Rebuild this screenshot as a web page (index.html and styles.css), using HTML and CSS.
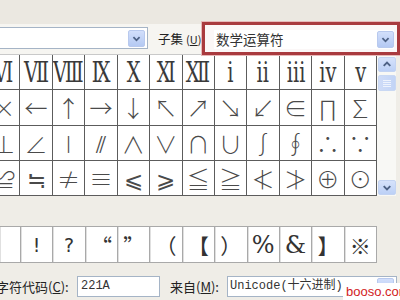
FILE: index.html
```html
<!DOCTYPE html>
<html>
<head>
<meta charset="utf-8">
<link rel="stylesheet" href="styles.css">
</head>
<body>
<div class="dialog">
  <div class="top">
    <div class="combo font-combo">
      <div class="combo-text"></div>
      <div class="drop"><svg width="17" height="17" viewBox="0 0 17 17"><path d="M5 7 L8.5 10.5 L12 7" fill="none" stroke="#4d6185" stroke-width="2"/></svg></div>
    </div>
    <div class="label sub-label">子集<span class="acc">(<u>U</u>):</span></div>
    <div class="frame">
      <div class="combo subset-combo">
        <div class="combo-text">数学运算符</div>
        <div class="drop"><svg width="17" height="17" viewBox="0 0 17 17"><path d="M5 7 L8.5 10.5 L12 7" fill="none" stroke="#4d6185" stroke-width="2"/></svg></div>
      </div>
    </div>
  </div>
  <div class="main">
    <div class="grid">
      <div class="cell roman"><span>Ⅵ</span></div><div class="cell roman"><span>Ⅶ</span></div><div class="cell roman"><span>Ⅷ</span></div><div class="cell roman"><span>Ⅸ</span></div><div class="cell roman"><span>Ⅹ</span></div><div class="cell roman"><span>Ⅺ</span></div><div class="cell roman"><span>Ⅻ</span></div><div class="cell roman"><span>ⅰ</span></div><div class="cell roman"><span>ⅱ</span></div><div class="cell roman"><span>ⅲ</span></div><div class="cell roman"><span>ⅳ</span></div><div class="cell roman"><span>ⅴ</span></div>
      <div class="cell">×</div><div class="cell">←</div><div class="cell">↑</div><div class="cell">→</div><div class="cell">↓</div><div class="cell">↖</div><div class="cell">↗</div><div class="cell">↘</div><div class="cell">↙</div><div class="cell">∈</div><div class="cell">∏</div><div class="cell">∑</div>
      <div class="cell">⊥</div><div class="cell">∠</div><div class="cell">∣</div><div class="cell">⫽</div><div class="cell">∧</div><div class="cell">∨</div><div class="cell">∩</div><div class="cell">∪</div><div class="cell">∫</div><div class="cell">∮</div><div class="cell">∴</div><div class="cell">∵</div>
      <div class="cell">≌</div><div class="cell">≒</div><div class="cell">≠</div><div class="cell">≡</div><div class="cell">⩽</div><div class="cell">⩾</div><div class="cell">≦</div><div class="cell">≧</div><div class="cell">≮</div><div class="cell">≯</div><div class="cell">⊕</div><div class="cell">⊙</div>
    </div>
    <div class="scrollbar">
      <div class="sbtn"><svg width="17" height="15" viewBox="0 0 17 15"><path d="M5 9 L8.5 5.5 L12 9" fill="none" stroke="#4d6185" stroke-width="2"/></svg></div>
      <div class="thumb"><i></i><i></i><i></i><i></i></div>
      <div class="track"></div>
      <div class="sbtn"><svg width="17" height="15" viewBox="0 0 17 15"><path d="M5 6 L8.5 9.5 L12 6" fill="none" stroke="#4d6185" stroke-width="2"/></svg></div>
    </div>
  </div>
  <div class="recent">
    <div class="rcell"></div><div class="rcell">!</div><div class="rcell">?</div><div class="rcell">“</div><div class="rcell">”</div><div class="rcell">（</div><div class="rcell">【</div><div class="rcell">）</div><div class="rcell">%</div><div class="rcell">&amp;</div><div class="rcell">】</div><div class="rcell">※</div>
  </div>
  <div class="bottom">
    <div class="label code-label">字符代码(<u>C</u>):</div>
    <div class="field">221A</div>
    <div class="label from-label">来自(<u>M</u>):</div>
    <div class="combo from-combo">
      <div class="combo-text mono">Unicode(十六进制)</div>
      <div class="drop"><svg width="17" height="17" viewBox="0 0 17 17"><path d="M5 7 L8.5 10.5 L12 7" fill="none" stroke="#4d6185" stroke-width="2"/></svg></div>
    </div>
  </div>
  <div class="watermark">booso.com</div>
</div>
</body>
</html>
```
FILE: styles.css
```css
* { box-sizing: border-box; }
html, body { margin: 0; padding: 0; }
body {
  width: 400px;
  height: 300px;
  overflow: hidden;
  background: #efede7;
  font-family: "Noto Sans CJK SC", "Liberation Sans", sans-serif;
  color: #222;
}
.dialog {
  position: relative;
  width: 400px;
  height: 300px;
  display: flex;
  flex-direction: column;
  overflow: hidden;
}
.top {
  height: 54px;
  display: flex;
  align-items: flex-start;
  background: linear-gradient(#ebe8e1 0, #ebe8e1 24px, #f6f5f1 24px);
}
.combo {
  display: flex;
  align-items: center;
  background: #fff;
  border: 1px solid #a5b4c6;
  padding: 1px 2px 1px 2px;
}
.combo-text {
  flex: 1;
  font-size: 13px;
  line-height: 17px;
  padding-left: 3px;
  color: #333;
  white-space: nowrap;
  overflow: hidden;
}
.drop {
  width: 17px;
  height: 17px;
  border-radius: 2px;
  background: linear-gradient(#d2dffb, #b4c9f3);
  border: 1px solid #b8c9ee;
  display: flex;
  align-items: center;
  justify-content: center;
}
.drop svg { display: block; }
.font-combo {
  margin-top: 27px;
  margin-left: -3px;
  width: 151px;
  height: 22px;
}
.label {
  font-size: 13px;
  white-space: nowrap;
  color: #222;
}
.label u { text-decoration: underline; }
.sub-label {
  margin-top: 29px;
  margin-left: 10px;
  width: 46px;
  font-size: 12.5px;
}
.acc {
  font-size: 11px;
  margin-left: 3px;
}
.frame {
  position: relative;
  z-index: 1;
  margin-top: 22px;
  margin-left: -2px;
  width: 198px;
  height: 33px;
  border: 3px solid #a93a3e;
  box-shadow: 0 0 0 1px #e7b9b9;
  padding: 5px 3px 3px 9px;
  background: #fbf7f7;
}
.subset-combo {
  height: 19px;
  border: none;
  padding: 0 0 0 2px;
}
.subset-combo .combo-text { padding-left: 0; font-size: 13.5px; }
.main {
  height: 142px;
  display: flex;
}
.grid {
  flex: none;
  width: 389px;
  margin-left: -12px;
  display: grid;
  grid-template-columns: repeat(12, 1fr);
  grid-template-rows: repeat(4, 1fr);
  background: #fff;
  border-top: 1px solid #c9c9c9;
}
.cell {
  border-right: 1px solid #5c5c5c;
  border-bottom: 1px solid #5c5c5c;
  display: flex;
  align-items: center;
  justify-content: center;
  font-family: "Noto Sans CJK SC", "DejaVu Sans", sans-serif;
  font-weight: 300;
  font-size: 23px;
  color: #4a4a4a;
  overflow: hidden;
}
.roman {
  font-family: "DejaVu Serif", "Liberation Serif", serif;
  font-weight: 400;
  font-size: 27px;
  color: #3a3a3a;
}
.roman span {
  display: inline-block;
  transform: scaleX(0.72);
  white-space: nowrap;
}
.scrollbar {
  flex: none;
  width: 23px;
  display: flex;
  flex-direction: column;
  padding: 3px 4px 1px 1px;
  background: linear-gradient(90deg, #f8f8f5 0, #f8f8f5 19px, #efede7 19px);
}
.sbtn {
  width: 18px;
  height: 15px;
  border-radius: 2px;
  background: linear-gradient(#d6e2fb, #bcd0f6);
  border: 1px solid #c3d3f2;
  display: flex;
  align-items: center;
  justify-content: center;
}
.thumb {
  margin-top: 3px;
  width: 18px;
  height: 16px;
  border-radius: 2px;
  background: linear-gradient(90deg, #cfdcf8, #c2d4f6);
  border: 1px solid #c9d8f3;
  display: flex;
  flex-direction: column;
  align-items: center;
  justify-content: center;
  gap: 1px;
}
.thumb i {
  display: block;
  width: 8px;
  height: 1px;
  background: #eef3fd;
}
.track { flex: 1; }
.recent {
  margin-top: 30px;
  height: 37px;
  display: flex;
}
.rcell {
  width: 32.36px;
  height: 37px;
  background: #fff;
  border: 1px solid #a9a9a9;
  border-left: none;
  display: flex;
  align-items: center;
  justify-content: center;
  font-family: "Noto Sans CJK SC", sans-serif;
  font-size: 21px;
  color: #333;
  box-shadow: inset 1px 0 0 #e0e0e0;
}
.rcell:first-child { width: 21px; }
.rcell:nth-child(2), .rcell:nth-child(3) { font-family: "DejaVu Sans", sans-serif; font-size: 19px; }
.rcell:nth-child(9), .rcell:nth-child(10) { font-family: "DejaVu Serif", serif; font-size: 24px; }
.bottom {
  margin-top: 13px;
  display: flex;
  align-items: center;
  height: 21px;
}
.code-label {
  margin-left: -4px;
  width: 81px;
}
.field {
  width: 83px;
  height: 21px;
  background: #fff;
  border: 1px solid #a5b4c6;
  font-family: "Liberation Mono", monospace;
  font-size: 12px;
  line-height: 19px;
  padding-left: 3px;
  color: #333;
}
.from-label {
  margin-left: 10px;
  width: 57px;
}
.from-combo {
  width: 170px;
  height: 21px;
  padding: 1px 2px 1px 2px;
}
.mono {
  font-family: "Liberation Mono", "Noto Sans CJK SC", monospace;
  font-size: 12px;
  padding-left: 0;
}
.watermark {
  position: absolute;
  right: 0;
  bottom: 0;
  width: 57px;
  height: 17px;
  background: #fff;
  color: #d21d1d;
  font-family: "Liberation Sans", sans-serif;
  font-size: 13px;
  line-height: 17px;
  padding-left: 3px;
}
```
